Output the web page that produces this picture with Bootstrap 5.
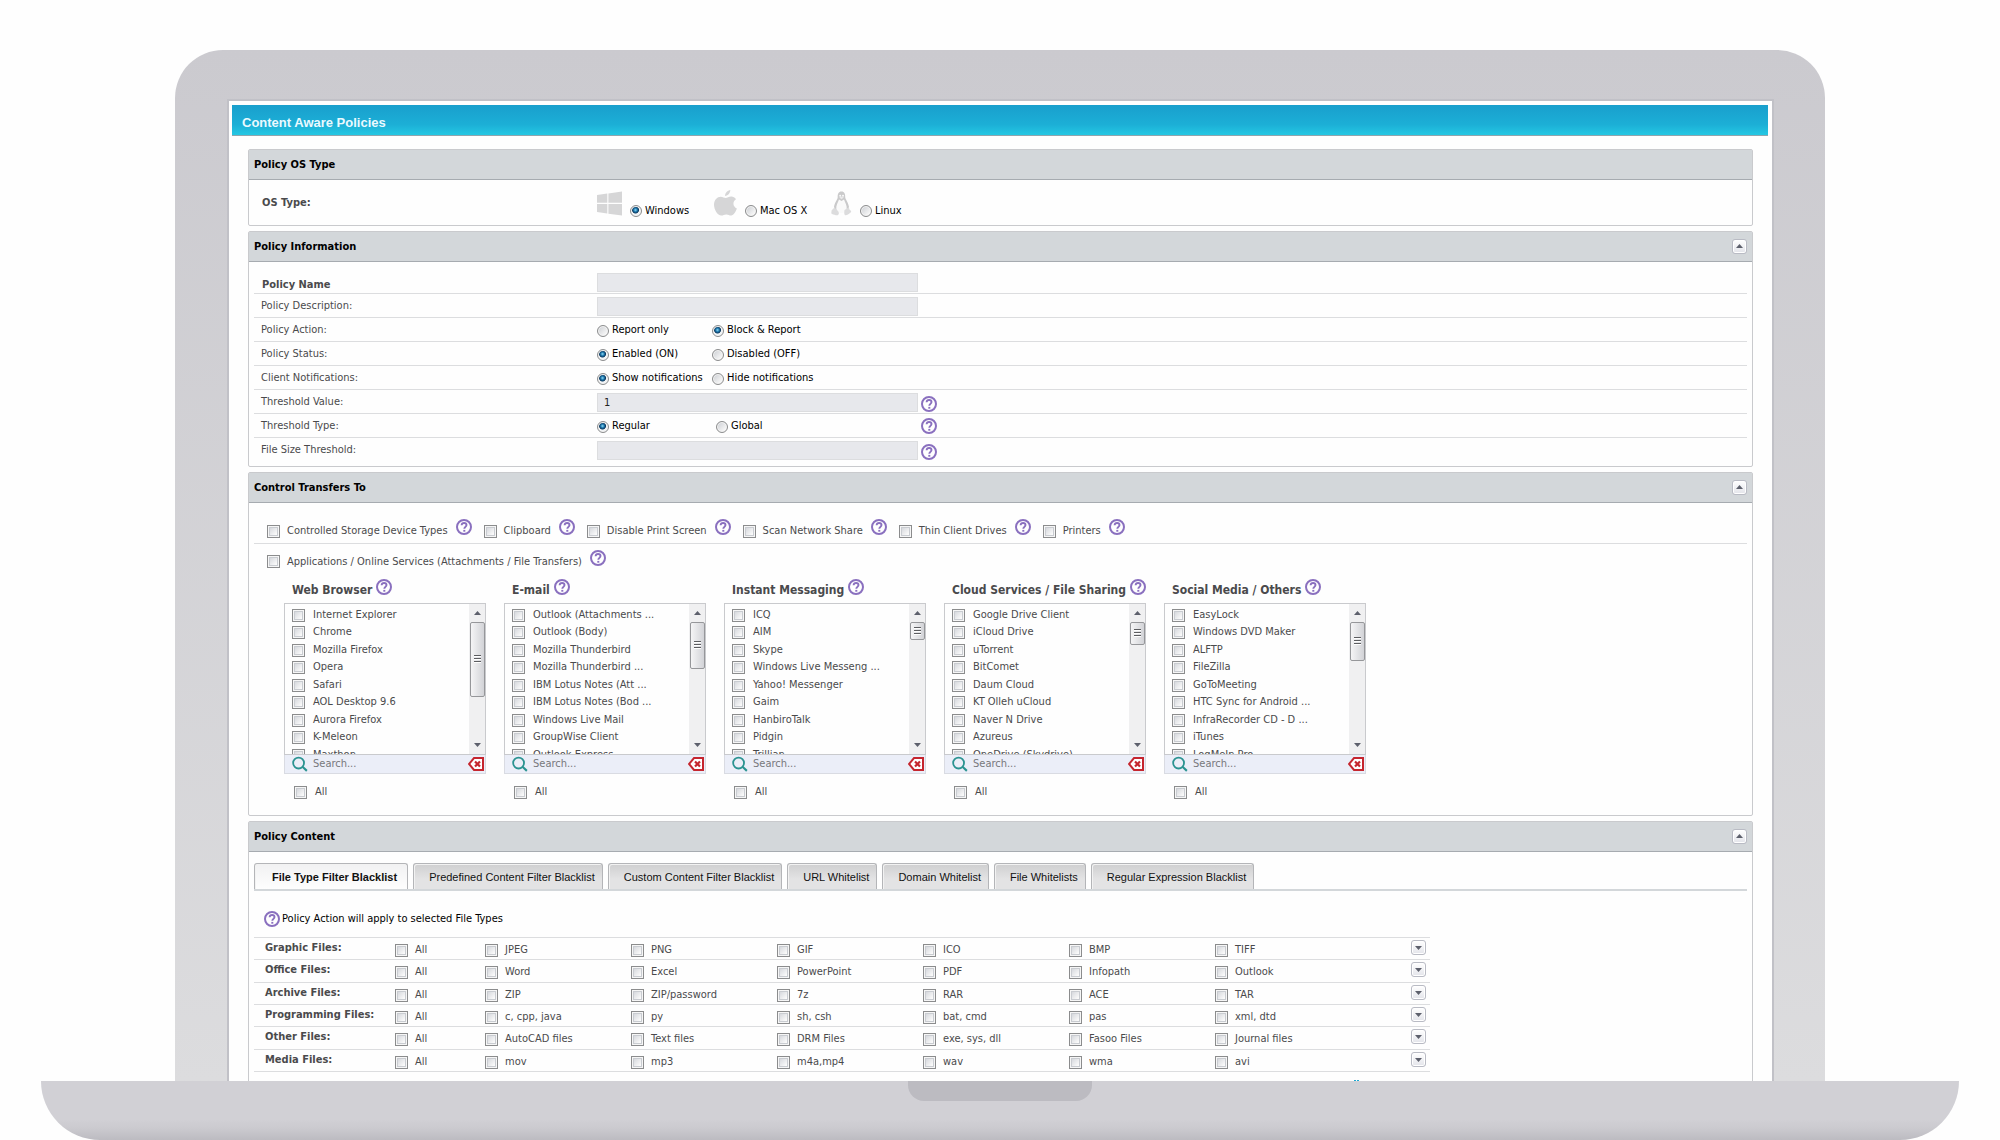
<!DOCTYPE html>
<html lang="en">
<head>
<meta charset="utf-8">
<meta name="viewport" content="width=device-width, initial-scale=1">
<title>Content Aware Policies</title>
<link rel="stylesheet" href="https://cdn.jsdelivr.net/npm/bootstrap@5.3.0/dist/css/bootstrap.min.css">
<style>
  :root { --ink: #4a4a4c; --line: #dcdddf; --edge: #c9cacd; --bar: #d3d7da; --violet: #8a70bf; }
  body { font-family: "DejaVu Sans Condensed", "DejaVu Sans", "Noto Sans", sans-serif; font-size: 11px; line-height: 16px; color: var(--ink); background: #fefefe; }

  /* laptop */
  .laptop { height: 100vh; padding-top: 50px; }
  .lid { width: 82.5%; min-height: 0; padding: 49px 51px 0 52px; border-radius: 48px 48px 0 0; background: linear-gradient(#cbcacf, #dcdcde); }
  .display { background: #fefefe; border: 2px solid #c1c1c7; border-bottom: 0; padding: 4px 4px 0 3px; }
  .keyboard { width: 95.9%; height: 59px; border-radius: 0 0 64px 64px; background: linear-gradient(#d1d0d5 65%, #cbcacf 80%, #bcbbc1); }
  .notch { width: 184px; height: 20px; border-radius: 0 0 16px 16px; background: #bcbbc1; }

  .title-bar { height: 31px; padding: 0 10px; font: bold 13px/35px "Liberation Sans", Arial, sans-serif; color: #eafaff; background: linear-gradient(#199fcd, #1cafd6 65%, #24c7e3); border-bottom: 1px solid #8fa5ad; }
  .sheet { padding: 13px 15px 0 16px; }

  /* panels */
  .panel { border: 1px solid var(--edge); border-radius: 2px; margin-bottom: 5px; }
  .panel-head { height: 30px; padding: 0 5px; background: var(--bar); border-bottom: 1px solid #a6abb0; }
  .panel-head h2 { margin: 0; font-size: 11px; line-height: 16px; font-weight: bold; color: #000; }
  .panel-head .toggle { margin-bottom: 1px; }
  .panel-body { padding: 0 5px; }
  .toggle { width: 15px; height: 15px; padding: 0; border: 1px solid #b9bbc4; border-radius: 3px; background: linear-gradient(#fff, #e3e4ea); box-shadow: inset 0 0 0 1px #fff; display: flex; align-items: center; justify-content: center; }

  /* tick boxes and radios */
  input[type=checkbox], input[type=radio] { appearance: none; flex: none; margin: 0; }
  input[type=checkbox] { width: 13px; height: 13px; border: 1px solid #8b8c8d; background: linear-gradient(135deg, #cbced4, #fafafa 75%); box-shadow: inset 0 0 0 1px #f6f6f6, inset 0 0 0 2px #c9ccd1; }
  input[type=radio] { width: 12px; height: 12px; border: 1px solid #8b8c8d; border-radius: 50%; background: linear-gradient(135deg, #c9ccd1, #f7f7f7 80%); box-shadow: inset 0 0 0 1px #f4f4f4; }
  input[type=radio]:checked { background: radial-gradient(circle at 45% 40%, #8fdcf7 0, #1d76ab 22%, #0d3a60 38%, #f0f3f5 48%); }
  .choice { display: flex; align-items: center; color: #000; gap: 3px; }
  .help { flex: none; display: block; width: 16px; height: 16px; padding: 0; border: 0; background: none; color: var(--violet); }
  .help svg { display: block; }

  /* policy information */
  .label-col { flex: 0 0 343px; padding-left: 7px; }
  .strong-label { font-weight: bold; padding-left: 8px; }
  .os-row { height: 45px; }
  .os-item { width: 117px; gap: 8px; }
  .os-item .choice { margin-bottom: -3px; }
  .form-line { height: 24px; border-bottom: 1px solid var(--line); }
  .form-line:first-child { height: 32px; }
  .form-line:last-child { border-bottom: 0; height: 28px; padding-bottom: 5px; }
  .form-line input[type=radio] { margin-top: 2px; }
  .field-box { width: 321px; height: 19px; padding: 0 6px; font: inherit; color: #222; background: #e7e8ec; border: 1px solid var(--line); margin: 3px 0 1px; }
  .field-col { width: 321px; margin-right: 3px; }
  .option { width: 115px; }
  .option-wide { width: 119px; }

  /* transfers */
  .transfer-row { height: 41px; padding-left: 13px; border-bottom: 1px solid var(--line); gap: 12px; }
  .apps-row { height: 35px; padding-left: 13px; }
  .tick { display: flex; align-items: center; gap: 7px; }
  .tick-help { gap: 8px; }
  .lists { padding-left: 30px; gap: 18px; }
  .service { width: 202px; }
  .service-head { height: 24px; gap: 4px; }
  .service h3 { margin: 0; font-size: 12px; line-height: 22px; font-weight: bold; padding-left: 8px; white-space: nowrap; }
  .scroll-box { height: 152px; border: 1px solid var(--edge); overflow: hidden; }
  .items { padding: 3px 0 0 7px; min-width: 0; height: 150px; overflow: hidden; }
  .items li { height: 17px; }
  .items li:nth-child(even) { height: 18px; }
  .items .tick, .all-tick { gap: 8px; }
  .track { width: 16px; flex: none; height: 150px; background: #f0f0f1; padding: 7px 0; }
  .thumb { width: 15px; border: 1px solid #96979a; border-radius: 2px; background: linear-gradient(90deg, #f5f5f6, #d2d3d7); margin: 7px 0 auto; display: flex; align-items: center; justify-content: center; }
  .search-bar { height: 19px; background: #ebeef8; border: 1px solid #d9dbe2; border-top: 0; padding: 0 1px 0 7px; gap: 5px; }
  .search-bar input { flex: 1; min-width: 0; font: inherit; color: var(--ink); border: 0; background: none; padding: 0; outline: 0; }
  .search-bar input::placeholder { color: #77787c; opacity: 1; }
  .clear { padding: 0; border: 0; background: none; display: block; }
  .all-tick { padding: 10px 0 15px 10px; }

  /* content tabs */
  .tabs { margin: 0; padding: 11px 0 0; border-bottom: 2px solid var(--bar); gap: 5px; }
  .tabs .nav-link { height: 26px; padding: 0 7px 0 15px; font: 11px/27px "Liberation Sans", Arial, sans-serif; color: #111; border: 1px solid #b4b5b8; border-bottom: 0; border-radius: 3px 3px 0 0; background: linear-gradient(#cfcfd0, #e3e3e4 60%); box-shadow: inset 1px 1px 0 #f2f2f2; }
  .tabs .nav-link.active { padding: 0 10px 0 17px; font-weight: bold; color: #111; background: linear-gradient(#f1f1f2, #fefefe); }
  .note { padding: 20px 0 10px 10px; gap: 2px; color: #000; }
  .files { width: 1176px; table-layout: fixed; border-collapse: collapse; border-top: 1px solid var(--line); }
  .files tr { height: 22px; border-bottom: 1px solid var(--line); }
  .files tr:nth-child(3n+2) { height: 23px; }
  .files th, .files td { padding: 0; vertical-align: top; line-height: 16px; }
  .files th { padding: 2px 0 0 11px; font-weight: bold; white-space: nowrap; }
  .files td .tick { padding-top: 4px; line-height: 16px; }
  .files td .toggle { margin-top: 2px; }
  .files-more { width: 1176px; height: 40px; padding: 8px 70px 0 0; }
</style>
<script src="https://cdn.jsdelivr.net/npm/bootstrap@5.3.0/dist/js/bootstrap.bundle.min.js"></script>
</head>
<body>
<svg width="0" height="0" class="d-none" aria-hidden="true">
  <symbol id="i-help" viewBox="0 0 16 16"><circle cx="8" cy="8" r="7" fill="#fff" stroke="currentColor" stroke-width="2"/><path d="M5.600 6.300C5.700 4.800 6.700 4 8.100 4c1.400 0 2.400.800 2.400 2.100 0 1.700-2.200 1.900-2.200 3.700" fill="none" stroke="currentColor" stroke-width="1.900"/><rect x="7.300" y="10.900" width="2" height="1.800" fill="currentColor"/></symbol>
  <symbol id="i-up" viewBox="0 0 7 4"><path d="M0 4 3.500 0 7 4z" fill="#5d606c"/></symbol>
  <symbol id="i-down" viewBox="0 0 7 4"><path d="M0 0h7L3.500 4z" fill="#5d606c"/></symbol>
  <symbol id="i-search" viewBox="0 0 17 16"><circle cx="7" cy="7" r="5.800" fill="none" stroke="#2b9391" stroke-width="1.900"/><path d="m11.200 11 4.600 4.300" stroke="#2b9391" stroke-width="2.200"/></symbol>
  <symbol id="i-clear" viewBox="0 0 16 14"><path d="M6 1h9v12H6L1 7z" fill="#fff" stroke="#c5262e" stroke-width="2"/><path d="m7 4.500 5 5m0-5-5 5" stroke="#c5262e" stroke-width="2.200"/></symbol>
  <symbol id="i-grip" viewBox="0 0 7 9"><path d="M0 .500h7M0 3.500h7M0 6.500h7" stroke="#5c5d60"/><path d="M0 1.500h7M0 4.500h7M0 7.500h7" stroke="#fff"/></symbol>
</svg>

<div class="laptop d-flex flex-column align-items-center overflow-hidden">
  <div class="lid d-flex flex-column flex-fill overflow-hidden">
    <main class="display flex-fill overflow-hidden">
      <h1 class="title-bar m-0">Content Aware Policies</h1>
      <div class="sheet">

        <section class="panel">
          <div class="panel-head d-flex align-items-center"><h2>Policy OS Type</h2></div>
          <div class="panel-body">
            <div class="os-row d-flex align-items-center">
              <span class="label-col strong-label">OS Type:</span>
              <div class="d-flex">
                <div class="os-item d-flex align-items-end">
                  <svg width="25" height="25" viewBox="0 0 25 25" fill="#d6d6d7" aria-hidden="true"><path d="M0 4 10.300 2.600V11.700H0zM11.400 2.400 25 .500v11.200H11.400zM0 13h10.300v9.400L0 21zM11.400 13H25v11.600l-13.600-1.900z"/></svg>
                  <label class="choice"><input type="radio" name="os" checked>Windows</label>
                </div>
                <div class="os-item d-flex align-items-end">
                  <svg width="23" height="26" viewBox="0 0 23 26" fill="#d6d6d7" aria-hidden="true"><path d="M16.300 0c.200 2.700-2.400 6-5.200 5.900C10.900 3.200 13.600.200 16.300 0zM22 9.200c-3.800 2.300-3.200 7.500.900 9.200-1 2.700-3.200 6.900-5.700 7.100-1.900.100-2.700-1.100-4.900-1.100-2.300 0-3 1.100-4.900 1.200C3.700 25.700 0 19.700 0 14.800 0 9.800 3.300 6.700 6.700 6.700c2 0 3.700 1.300 5 1.300 1.200 0 3.200-1.500 5.600-1.500 1.800 0 3.600 1.100 4.700 2.700z"/></svg>
                  <label class="choice"><input type="radio" name="os">Mac OS X</label>
                </div>
                <div class="os-item d-flex align-items-end">
                  <svg width="21" height="25" viewBox="0 0 21 25" aria-hidden="true"><path d="M10.500.500C7.500.500 6.500 3 6.700 6c.100 2.500-3.200 5.500-3.700 10L5 21h11l2-5c-.500-4.500-3.700-7.500-3.800-10 .200-3-.700-5.500-3.700-5.500z" fill="#cacacb"/><path d="M8 8.500 10.500 10 13 8.500c1 3 3.200 6 2.700 9.500-.300 2-1.700 4-5.200 4s-4.900-2-5.200-4C4.800 14.500 7 11.500 8 8.500z" fill="#fafafa"/><path d="M8.200 6.600 10.500 5.400l2.400 1.200-2.400 1.700z" fill="#e9e9ea"/><circle cx="9.200" cy="4.700" r="1" fill="#fafafa"/><circle cx="12" cy="4.700" r="1" fill="#fafafa"/><path d="M3.500 16.500C2 18 .300 19 .500 20.300c0 1-.700 2.200.500 2.700 1.700.600 4.500 1.700 5.700 1.200 1.600-.700 1.400-2.600.500-4zM17.500 16.500c1 .500.500 1.800 1.500 2.500 1.500 1 1.700 1.700 0 3-1.300 1-3.300 2.700-4.600 2.300-1.600-.600-1.200-3.300-.900-5.300z" fill="#dcdcdd"/></svg>
                  <label class="choice"><input type="radio" name="os">Linux</label>
                </div>
              </div>
            </div>
          </div>
        </section>

        <section class="panel">
          <div class="panel-head d-flex align-items-center justify-content-between"><h2>Policy Information</h2><button type="button" class="toggle" aria-label="Collapse"><svg width="7" height="4"><use href="#i-up"/></svg></button></div>
          <form class="panel-body">
            <div class="form-line d-flex align-items-end">
              <label class="label-col strong-label" for="f-name">Policy Name</label>
              <div class="field-col"><input class="field-box d-block" id="f-name" type="text"></div>
            </div>
            <div class="form-line d-flex align-items-center">
              <label class="label-col" for="f-desc">Policy Description:</label>
              <div class="field-col"><input class="field-box d-block" id="f-desc" type="text"></div>
            </div>
            <div class="form-line d-flex align-items-center">
              <span class="label-col">Policy Action:</span>
              <label class="choice option"><input type="radio" name="action">Report only</label>
              <label class="choice"><input type="radio" name="action" checked>Block &amp; Report</label>
            </div>
            <div class="form-line d-flex align-items-center">
              <span class="label-col">Policy Status:</span>
              <label class="choice option"><input type="radio" name="status" checked>Enabled (ON)</label>
              <label class="choice"><input type="radio" name="status">Disabled (OFF)</label>
            </div>
            <div class="form-line d-flex align-items-center">
              <span class="label-col">Client Notifications:</span>
              <label class="choice option"><input type="radio" name="notify" checked>Show notifications</label>
              <label class="choice"><input type="radio" name="notify">Hide notifications</label>
            </div>
            <div class="form-line d-flex align-items-center">
              <label class="label-col" for="f-value">Threshold Value:</label>
              <div class="field-col"><input class="field-box d-block" id="f-value" type="text" value="1"></div>
              <button type="button" class="help mt-1" aria-label="Help"><svg width="16" height="16"><use href="#i-help"/></svg></button>
            </div>
            <div class="form-line d-flex align-items-center">
              <span class="label-col">Threshold Type:</span>
              <div class="field-col d-flex">
                <label class="choice option-wide"><input type="radio" name="type" checked>Regular</label>
                <label class="choice"><input type="radio" name="type">Global</label>
              </div>
              <button type="button" class="help" aria-label="Help"><svg width="16" height="16"><use href="#i-help"/></svg></button>
            </div>
            <div class="form-line d-flex align-items-center">
              <label class="label-col" for="f-size">File Size Threshold:</label>
              <div class="field-col"><input class="field-box d-block" id="f-size" type="text"></div>
              <button type="button" class="help mt-1" aria-label="Help"><svg width="16" height="16"><use href="#i-help"/></svg></button>
            </div>
          </form>
        </section>

        <section class="panel">
          <div class="panel-head d-flex align-items-center justify-content-between"><h2>Control Transfers To</h2><button type="button" class="toggle" aria-label="Collapse"><svg width="7" height="4"><use href="#i-up"/></svg></button></div>
          <div class="panel-body">
            <div class="transfer-row d-flex align-items-end" id="transfers"></div>
            <div class="apps-row d-flex align-items-center tick-help">
              <label class="tick"><input type="checkbox">Applications / Online Services (Attachments / File Transfers)</label>
              <button type="button" class="help mb-2" aria-label="Help"><svg width="16" height="16"><use href="#i-help"/></svg></button>
            </div>
            <div class="lists d-flex" id="services"></div>
          </div>
        </section>

        <section class="panel">
          <div class="panel-head d-flex align-items-center justify-content-between"><h2>Policy Content</h2><button type="button" class="toggle" aria-label="Collapse"><svg width="7" height="4"><use href="#i-up"/></svg></button></div>
          <div class="panel-body">
            <ul class="nav tabs">
              <li class="nav-item"><a class="nav-link active" href="#">File Type Filter Blacklist</a></li>
              <li class="nav-item"><a class="nav-link" href="#">Predefined Content Filter Blacklist</a></li>
              <li class="nav-item"><a class="nav-link" href="#">Custom Content Filter Blacklist</a></li>
              <li class="nav-item"><a class="nav-link" href="#">URL Whitelist</a></li>
              <li class="nav-item"><a class="nav-link" href="#">Domain Whitelist</a></li>
              <li class="nav-item"><a class="nav-link" href="#">File Whitelists</a></li>
              <li class="nav-item"><a class="nav-link" href="#">Regular Expression Blacklist</a></li>
            </ul>
            <div class="note d-flex align-items-center">
              <button type="button" class="help" aria-label="Help"><svg width="16" height="16"><use href="#i-help"/></svg></button>
              <span>Policy Action will apply to selected File Types</span>
            </div>
            <table class="files">
              <colgroup><col width="141"><col width="90"><col width="146"><col width="146"><col width="146"><col width="146"><col width="146"><col width="196"><col width="19"></colgroup>
              <tbody id="files"></tbody>
            </table>
            <div class="files-more d-flex justify-content-end">
              <svg width="6" height="9" viewBox="0 0 6 9" aria-hidden="true"><path d="M1 0v9M4 0v9" stroke="#1fa9d2" stroke-width="2"/></svg>
            </div>
          </div>
        </section>

      </div>
    </main>
  </div>
  <footer class="keyboard flex-shrink-0"><div class="notch mx-auto"></div></footer>
</div>

<script>
  const icon = (id, w, h) => `<svg width="${w}" height="${h}" class="d-block"><use href="#${id}"/></svg>`;
  const help = cls => `<button type="button" class="help ${cls}" aria-label="Help">${icon('i-help', 16, 16)}</button>`;
  const tick = text => `<label class="tick"><input type="checkbox">${text}</label>`;

  document.getElementById('transfers').innerHTML =
    ['Controlled Storage Device Types', 'Clipboard', 'Disable Print Screen', 'Scan Network Share', 'Thin Client Drives', 'Printers']
      .map(t => `<div class="d-flex align-items-center tick-help">${tick(t)}${help('mb-2')}</div>`).join('');

  const services = [
    ['Web Browser', 75, ['Internet Explorer', 'Chrome', 'Mozilla Firefox', 'Opera', 'Safari', 'AOL Desktop 9.6', 'Aurora Firefox', 'K-Meleon', 'Maxthon']],
    ['E-mail', 47, ['Outlook (Attachments ...', 'Outlook (Body)', 'Mozilla Thunderbird', 'Mozilla Thunderbird ...', 'IBM Lotus Notes (Att ...', 'IBM Lotus Notes (Bod ...', 'Windows Live Mail', 'GroupWise Client', 'Outlook Express']],
    ['Instant Messaging', 18, ['ICQ', 'AIM', 'Skype', 'Windows Live Messeng ...', 'Yahoo! Messenger', 'Gaim', 'HanbiroTalk', 'Pidgin', 'Trillian']],
    ['Cloud Services / File Sharing', 23, ['Google Drive Client', 'iCloud Drive', 'uTorrent', 'BitComet', 'Daum Cloud', 'KT Olleh uCloud', 'Naver N Drive', 'Azureus', 'OneDrive (Skydrive)']],
    ['Social Media / Others', 39, ['EasyLock', 'Windows DVD Maker', 'ALFTP', 'FileZilla', 'GoToMeeting', 'HTC Sync for Android ...', 'InfraRecorder CD - D ...', 'iTunes', 'LogMeIn Pro']]
  ];
  document.getElementById('services').innerHTML = services.map(([name, thumb, items]) => `
    <div class="service">
      <div class="service-head d-flex align-items-start"><h3>${name}</h3>${help('')}</div>
      <div class="scroll-box d-flex">
        <ul class="items list-unstyled m-0 flex-fill">${items.map(i => `<li>${tick(i)}</li>`).join('')}</ul>
        <div class="track d-flex flex-column align-items-center" aria-hidden="true">${icon('i-up', 7, 4)}
          <div class="thumb" style="height:${thumb}px">${icon('i-grip', 7, 9)}</div>${icon('i-down', 7, 4)}</div>
      </div>
      <div class="search-bar d-flex align-items-center">${icon('i-search', 16, 16)}<input type="text" placeholder="Search..." aria-label="Search ${name}"><button type="button" class="clear" aria-label="Clear">${icon('i-clear', 16, 14)}</button></div>
      <label class="all-tick d-flex align-items-center"><input type="checkbox">All</label>
    </div>`).join('');

  const files = [
    ['Graphic Files:', 'JPEG', 'PNG', 'GIF', 'ICO', 'BMP', 'TIFF'],
    ['Office Files:', 'Word', 'Excel', 'PowerPoint', 'PDF', 'Infopath', 'Outlook'],
    ['Archive Files:', 'ZIP', 'ZIP/password', '7z', 'RAR', 'ACE', 'TAR'],
    ['Programming Files:', 'c, cpp, java', 'py', 'sh, csh', 'bat, cmd', 'pas', 'xml, dtd'],
    ['Other Files:', 'AutoCAD files', 'Text files', 'DRM Files', 'exe, sys, dll', 'Fasoo Files', 'Journal files'],
    ['Media Files:', 'mov', 'mp3', 'm4a,mp4', 'wav', 'wma', 'avi']
  ];
  document.getElementById('files').innerHTML = files.map(([name, ...types]) => `
    <tr><th scope="row">${name}</th>${['All', ...types].map(t => `<td>${tick(t)}</td>`).join('')}
    <td><button type="button" class="toggle" aria-label="Expand ${name}">${icon('i-down', 7, 4)}</button></td></tr>`).join('');
</script>
</body>
</html>
